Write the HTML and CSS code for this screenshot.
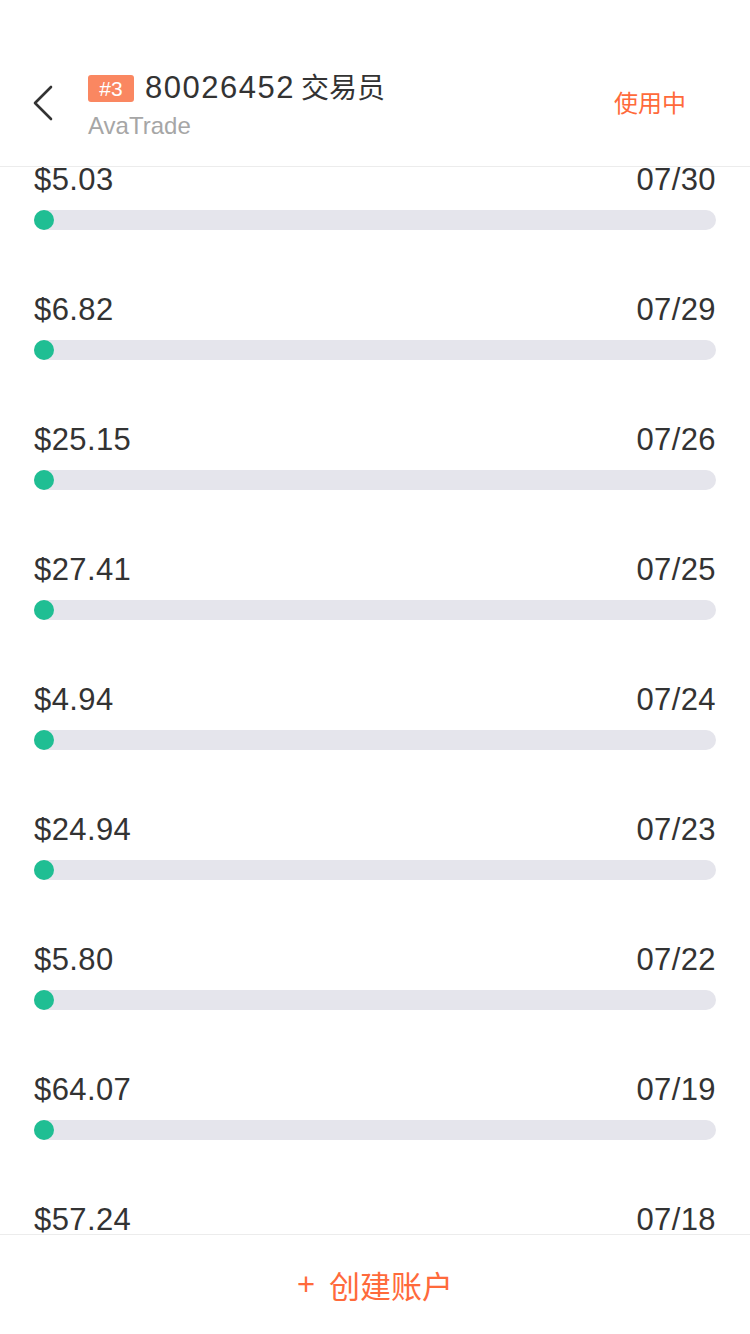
FILE: index.html
```html
<!DOCTYPE html>
<html lang="zh">
<head>
<meta charset="utf-8">
<link rel="stylesheet" href="styles.css">
</head>
<body>
<div class="page">
  <header class="header">
    <div class="back">
      <svg width="24" height="36" viewBox="0 0 24 36"><path d="M20 2 L4 18 L20 34" fill="none" stroke="#333" stroke-width="2.6" stroke-linecap="round" stroke-linejoin="round"/></svg>
    </div>
    <div class="info">
      <div class="title-row"><span class="badge">#3</span><span class="title-num">80026452</span><span class="title-cn">交易员</span></div>
      <div class="sub">AvaTrade</div>
    </div>
    <div class="status">使用中</div>
  </header>
  <main class="list">
    <div class="list-inner">
      <div class="row"><div class="row-top"><span>$5.03</span><span>07/30</span></div><div class="bar"><span class="dot"></span></div></div>
      <div class="row"><div class="row-top"><span>$6.82</span><span>07/29</span></div><div class="bar"><span class="dot"></span></div></div>
      <div class="row"><div class="row-top"><span>$25.15</span><span>07/26</span></div><div class="bar"><span class="dot"></span></div></div>
      <div class="row"><div class="row-top"><span>$27.41</span><span>07/25</span></div><div class="bar"><span class="dot"></span></div></div>
      <div class="row"><div class="row-top"><span>$4.94</span><span>07/24</span></div><div class="bar"><span class="dot"></span></div></div>
      <div class="row"><div class="row-top"><span>$24.94</span><span>07/23</span></div><div class="bar"><span class="dot"></span></div></div>
      <div class="row"><div class="row-top"><span>$5.80</span><span>07/22</span></div><div class="bar"><span class="dot"></span></div></div>
      <div class="row"><div class="row-top"><span>$64.07</span><span>07/19</span></div><div class="bar"><span class="dot"></span></div></div>
      <div class="row"><div class="row-top"><span>$57.24</span><span>07/18</span></div><div class="bar"><span class="dot"></span></div></div>
    </div>
  </main>
  <footer class="footer"><span class="plus">+</span>创建账户</footer>
</div>
</body>
</html>
```
FILE: styles.css
```css
* { box-sizing: border-box; }
html, body { margin: 0; padding: 0; background: #fff; }
body { font-family: "Liberation Sans", "Noto Sans CJK SC", sans-serif; color: #333; }
.page { width: 750px; height: 1334px; display: flex; flex-direction: column; overflow: hidden; }
.header { height: 167px; flex: none; border-bottom: 1px solid #ececec; display: flex; align-items: flex-start; padding-top: 70px; }
.back { width: 88px; padding-left: 31px; padding-top: 15px; }
.back svg { display: block; }
.info { flex: 1; }
.title-row { display: flex; align-items: baseline; height: 36px; }
.badge { align-self: center; background: #fa8761; color: #fff; font-size: 21px; height: 27px; line-height: 27px; width: 46px; text-align: center; border-radius: 3px; margin-right: 11px; }
.title-num { font-size: 31px; line-height: 36px; color: #333; letter-spacing: 1.5px; margin-right: 6px; }
.title-cn { font-size: 28px; line-height: 36px; color: #333; }
.sub { font-size: 24px; color: #a6a6a6; margin-top: 5px; line-height: 30px; }
.status { font-size: 24px; color: #ff6a3b; padding-top: 14px; width: 136px; }
.list { flex: 1; overflow: hidden; }
.list-inner { margin-top: -7px; padding: 0 34px; }
.row { height: 130px; }
.row-top { display: flex; justify-content: space-between; height: 40px; line-height: 40px; font-size: 31px; letter-spacing: 0.4px; color: #333; }
.bar { margin-top: 10px; height: 20px; border-radius: 10px; background: #e5e5ec; position: relative; }
.dot { position: absolute; left: 0; top: 0; width: 20px; height: 20px; border-radius: 50%; background: #1fbe93; }
.footer { height: 100px; flex: none; border-top: 1px solid #ececec; display: flex; align-items: center; justify-content: center; font-size: 31px; color: #ff6a3b; }
.plus { margin-right: 14px; }
```
